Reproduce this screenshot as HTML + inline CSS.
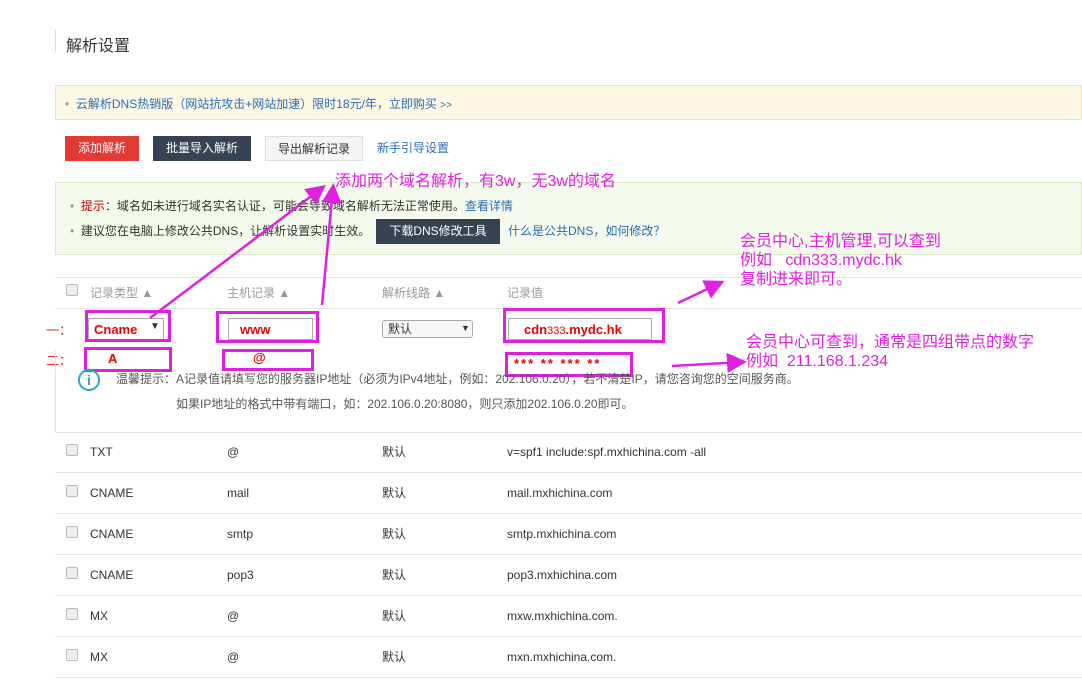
<!DOCTYPE html>
<html><head><meta charset="utf-8"><style>
*{margin:0;padding:0;box-sizing:border-box}
body{width:1082px;height:683px;background:#fff;font-family:"Liberation Sans","Noto Sans CJK SC",sans-serif;font-size:12px;color:#333;position:relative;overflow:hidden}
.a{position:absolute;white-space:nowrap}
.btn{position:absolute;top:136px;height:25px;line-height:25px;text-align:center;font-size:12px}
.mg{position:absolute;border:3px solid #e020e0}
.hl{position:absolute;left:55px;right:0;height:1px;background:#e5e5e5}
.cb{position:absolute;left:66px;width:12px;height:12px;border:1px solid #bbb;background:#eee;border-radius:2px}
.pk{color:#e020e0;font-size:16px}
.red{color:#e00;font-weight:bold;font-size:13px}
</style></head><body>
<div class="a" style="left:55px;top:30px;width:1px;height:22px;background:#ddd"></div>
<div class="a" style="left:66px;top:32px;font-size:16px;color:#333">解析设置</div>
<div class="a" style="left:55px;top:85px;width:1027px;height:35px;background:#fdf8e4;border:1px solid #f0e2b0"></div>
<div class="a" style="left:65px;top:95px;color:#2b6db5"><span style="color:#999">•</span>&nbsp;&nbsp;云解析DNS热销版（网站抗攻击+网站加速）限时18元/年，立即购买 <span style="font-size:10px">&gt;&gt;</span></div>
<div class="btn" style="left:65px;width:74px;background:#e23b35;color:#fff">添加解析</div>
<div class="btn" style="left:153px;width:98px;background:#364353;color:#fff">批量导入解析</div>
<div class="btn" style="left:265px;width:98px;background:#f5f5f5;border:1px solid #ddd;color:#333">导出解析记录</div>
<div class="a" style="left:377px;top:139px;color:#2b6db5">新手引导设置</div>
<div class="a" style="left:55px;top:182px;width:1027px;height:73px;background:#f4faec;border:1px solid #d9e8c7"></div>
<div class="a" style="left:70px;top:197px"><span style="color:#999">•</span>&nbsp;&nbsp;<span style="color:#c00">提示</span>：域名如未进行域名实名认证，可能会导致域名解析无法正常使用。<span style="color:#2b6db5">查看详情</span></div>
<div class="a" style="left:70px;top:222px"><span style="color:#999">•</span>&nbsp;&nbsp;建议您在电脑上修改公共DNS，让解析设置实时生效。</div>
<div class="a" style="left:376px;top:219px;width:124px;height:25px;line-height:25px;background:#364353;color:#fff;text-align:center">下载DNS修改工具</div>
<div class="a" style="left:508px;top:222px;color:#2b6db5">什么是公共DNS，如何修改？</div>
<div class="a pk" style="left:335px;top:167px">添加两个域名解析，有3w，无3w的域名</div>
<div class="hl" style="top:277px"></div>
<div class="cb" style="top:284px"></div>
<div class="a" style="left:90px;top:284px;color:#999">记录类型 ▲</div>
<div class="a" style="left:227px;top:284px;color:#999">主机记录 ▲</div>
<div class="a" style="left:382px;top:284px;color:#999">解析线路 ▲</div>
<div class="a" style="left:507px;top:284px;color:#999">记录值</div>
<div class="hl" style="top:308px"></div>
<div class="a" style="left:46px;top:320px;color:#e03030;font-size:13px">一：</div>
<div class="a" style="left:46px;top:350px;color:#e03030;font-size:13px">二：</div>
<div class="a" style="left:88px;top:318px;width:76px;height:22px;border:1px solid #aaa;background:#fff"></div>
<div class="a red" style="left:94px;top:322px">Cname</div>
<div class="a" style="left:150px;top:321px;font-size:10px">▼</div>
<div class="a" style="left:228px;top:318px;width:85px;height:22px;border:1px solid #aaa"></div>
<div class="a red" style="left:240px;top:322px">www</div>
<div class="a" style="left:382px;top:320px;width:91px;height:18px;border:1px solid #aaa;border-radius:3px;background:#f6f6f6"></div>
<div class="a" style="left:388px;top:320px">默认</div>
<div class="a" style="left:461px;top:323px;font-size:9px">▼</div>
<div class="a" style="left:508px;top:318px;width:144px;height:22px;border:1px solid #aaa"></div>
<div class="a red" style="left:524px;top:322px">cdn<span style="font-weight:normal;font-size:11px">333</span>.mydc.hk</div>
<div class="mg" style="left:85px;top:310px;width:86px;height:32px"></div>
<div class="mg" style="left:216px;top:311px;width:103px;height:32px"></div>
<div class="mg" style="left:503px;top:308px;width:162px;height:35px"></div>
<div class="mg" style="left:84px;top:347px;width:88px;height:25px"></div>
<div class="mg" style="left:222px;top:349px;width:92px;height:22px"></div>
<div class="mg" style="left:505px;top:352px;width:128px;height:25px"></div>
<div class="a red" style="left:108px;top:351px">A</div>
<div class="a red" style="left:253px;top:350px">@</div>
<div class="a red" style="left:514px;top:356px;letter-spacing:2px">*** ** *** **</div>
<div class="a" style="left:78px;top:369px;width:22px;height:22px;border:2px solid #2aa7c9;border-radius:50%;color:#2aa7c9;text-align:center;font-weight:bold;font-size:14px;line-height:18px">i</div>
<div class="a" style="left:116px;top:370px;color:#555">温馨提示：A记录值请填写您的服务器IP地址（必须为IPv4地址，例如：202.106.0.20），若不清楚IP，请您咨询您的空间服务商。</div>
<div class="a" style="left:176px;top:395px;color:#555">如果IP地址的格式中带有端口，如：202.106.0.20:8080，则只添加202.106.0.20即可。</div>
<div class="a" style="left:55px;top:350px;width:1px;height:82px;background:#e5e5e5"></div>
<div class="hl" style="top:432px"></div>
<div class="a pk" style="left:740px;top:232px;line-height:19px">会员中心,主机管理,可以查到<br>例如&nbsp;&nbsp;&nbsp;cdn333.mydc.hk<br>复制进来即可。</div>
<div class="a pk" style="left:746px;top:333px;line-height:19px">会员中心可查到，通常是四组带点的数字<br>例如&nbsp;&nbsp;211.168.1.234</div>
<div class="cb" style="top:444px"></div><div class="a" style="left:90px;top:445px">TXT</div><div class="a" style="left:227px;top:445px">@</div><div class="a" style="left:382px;top:443px">默认</div><div class="a" style="left:507px;top:445px">v=spf1 include:spf.mxhichina.com -all</div>
<div class="hl" style="top:472px"></div>
<div class="cb" style="top:485px"></div><div class="a" style="left:90px;top:486px">CNAME</div><div class="a" style="left:227px;top:486px">mail</div><div class="a" style="left:382px;top:484px">默认</div><div class="a" style="left:507px;top:486px">mail.mxhichina.com</div>
<div class="hl" style="top:513px"></div>
<div class="cb" style="top:526px"></div><div class="a" style="left:90px;top:527px">CNAME</div><div class="a" style="left:227px;top:527px">smtp</div><div class="a" style="left:382px;top:525px">默认</div><div class="a" style="left:507px;top:527px">smtp.mxhichina.com</div>
<div class="hl" style="top:554px"></div>
<div class="cb" style="top:567px"></div><div class="a" style="left:90px;top:568px">CNAME</div><div class="a" style="left:227px;top:568px">pop3</div><div class="a" style="left:382px;top:566px">默认</div><div class="a" style="left:507px;top:568px">pop3.mxhichina.com</div>
<div class="hl" style="top:595px"></div>
<div class="cb" style="top:608px"></div><div class="a" style="left:90px;top:609px">MX</div><div class="a" style="left:227px;top:609px">@</div><div class="a" style="left:382px;top:607px">默认</div><div class="a" style="left:507px;top:609px">mxw.mxhichina.com.</div>
<div class="hl" style="top:636px"></div>
<div class="cb" style="top:649px"></div><div class="a" style="left:90px;top:650px">MX</div><div class="a" style="left:227px;top:650px">@</div><div class="a" style="left:382px;top:648px">默认</div><div class="a" style="left:507px;top:650px">mxn.mxhichina.com.</div>
<div class="hl" style="top:677px"></div>
<svg class="a" style="left:0;top:0" width="1082" height="683">
<defs><marker id="m" markerWidth="8" markerHeight="8" refX="6" refY="4" orient="auto"><path d="M0,0 L8,4 L0,8 z" fill="#e020e0"/></marker></defs>
<g stroke="#e020e0" stroke-width="2.5" fill="none" marker-end="url(#m)">
<path d="M150,318 L322,188"/>
<path d="M322,305 L333,188"/>
<path d="M678,303 L720,283"/>
<path d="M672,366 L742,362"/>
</g></svg>
</body></html>
